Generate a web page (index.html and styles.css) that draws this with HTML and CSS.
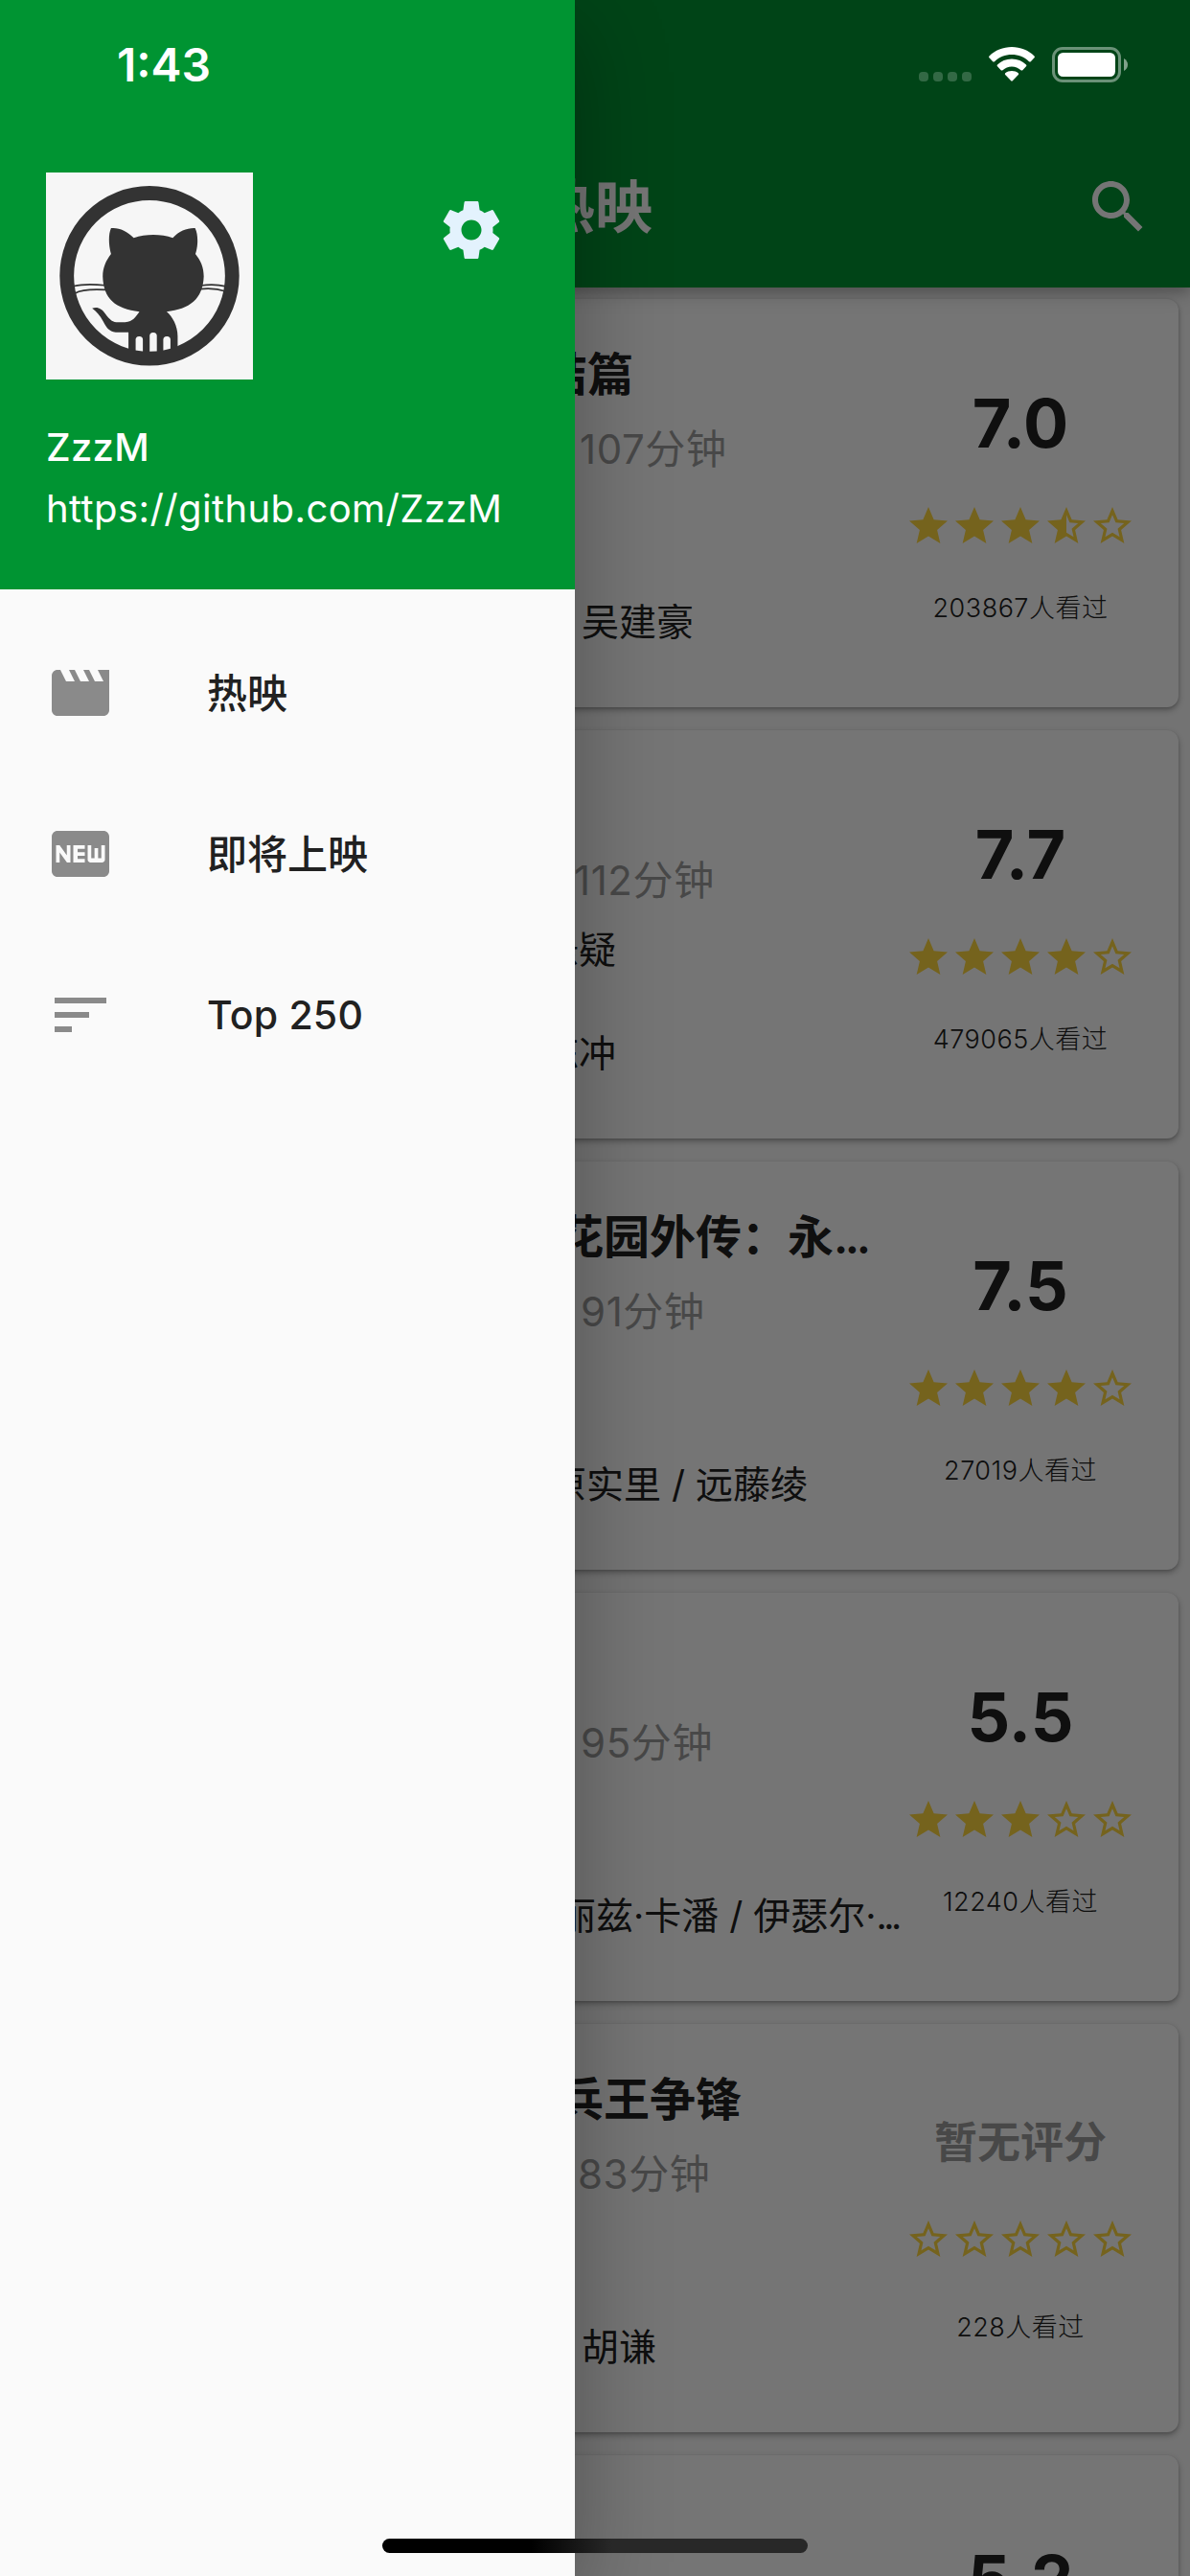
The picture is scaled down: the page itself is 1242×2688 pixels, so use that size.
FILE: index.html
```html
<!DOCTYPE html>
<html lang="zh-CN">
<head>
<meta charset="utf-8">
<title>热映</title>
<link rel="stylesheet" href="styles.css">
</head>
<body>
<svg class="defs" aria-hidden="true">
  <symbol id="star" viewBox="0 0 24 24"><path d="M12 17.27L18.18 21l-1.64-7.03L22 9.24l-7.19-.61L12 2 9.19 8.63 2 9.24l5.46 4.73L5.82 21z"/></symbol>
  <symbol id="half" viewBox="0 0 24 24"><path d="M22 9.24l-7.19-.62L12 2 9.19 8.63 2 9.24l5.46 4.73L5.82 21 12 17.27 18.18 21l-1.63-7.03L22 9.24zM12 15.4V6.1l1.71 4.04 4.38.38-3.32 2.88 1 4.28L12 15.4z"/></symbol>
  <symbol id="empty" viewBox="0 0 24 24"><path d="M22 9.24l-7.19-.62L12 2 9.19 8.63 2 9.24l5.46 4.73L5.82 21 12 17.27 18.18 21l-1.63-7.03L22 9.24zM12 15.4l-3.76 2.27 1-4.28-3.32-2.88 4.38-.38L12 6.1l1.71 4.04 4.38.38-3.32 2.88 1 4.28L12 15.4z"/></symbol>
</svg>
<div class="screen">
  <header class="appbar">
    <h1 class="appbar-title">热映</h1>
    <svg class="search" viewBox="0 0 24 24"><path d="M15.5 14h-.79l-.28-.27C15.41 12.59 16 11.11 16 9.5 16 5.91 13.09 3 9.5 3S3 5.91 3 9.5 5.91 16 9.5 16c1.61 0 3.09-.59 4.23-1.57l.27.28v.79l5 4.99L20.49 19l-4.99-5zm-6 0C7.01 14 5 11.99 5 9.5S7.01 5 9.5 5 14 7.01 14 9.5 11.99 14 9.5 14z"/></svg>
  </header>
  <main class="list">
    <article class="card ipman">
      <div class="info">
        <h2 class="title">结篇</h2>
        <p class="meta">107分钟</p>
        <p class="cast">吴建豪</p>
      </div>
      <div class="rating">
        <div class="score">7.0</div>
        <div class="stars"><svg><use href="#star"/></svg><svg><use href="#star"/></svg><svg><use href="#star"/></svg><svg><use href="#half"/></svg><svg><use href="#empty"/></svg></div>
        <div class="count">203867人看过</div>
      </div>
    </article>
    <article class="card sheep">
      <div class="info">
        <p class="meta">112分钟</p>
        <p class="genre">悬疑</p>
        <p class="cast">陈冲</p>
      </div>
      <div class="rating">
        <div class="score">7.7</div>
        <div class="stars"><svg><use href="#star"/></svg><svg><use href="#star"/></svg><svg><use href="#star"/></svg><svg><use href="#star"/></svg><svg><use href="#empty"/></svg></div>
        <div class="count">479065人看过</div>
      </div>
    </article>
    <article class="card violet">
      <div class="info">
        <h2 class="title">花园外传：永<span class="dots">...</span></h2>
        <p class="meta">91分钟</p>
        <p class="cast">原实里 / 远藤绫</p>
      </div>
      <div class="rating">
        <div class="score">7.5</div>
        <div class="stars"><svg><use href="#star"/></svg><svg><use href="#star"/></svg><svg><use href="#star"/></svg><svg><use href="#star"/></svg><svg><use href="#empty"/></svg></div>
        <div class="count">27019人看过</div>
      </div>
    </article>
    <article class="card family">
      <div class="info">
        <p class="meta">95分钟</p>
        <p class="cast">丽兹·卡潘 / 伊瑟尔·<span class="dots">...</span></p>
      </div>
      <div class="rating">
        <div class="score">5.5</div>
        <div class="stars"><svg><use href="#star"/></svg><svg><use href="#star"/></svg><svg><use href="#star"/></svg><svg><use href="#empty"/></svg><svg><use href="#empty"/></svg></div>
        <div class="count">12240人看过</div>
      </div>
    </article>
    <article class="card soldier">
      <div class="info">
        <h2 class="title">兵王争锋</h2>
        <p class="meta">83分钟</p>
        <p class="cast">胡谦</p>
      </div>
      <div class="rating unrated">
        <div class="score">暂无评分</div>
        <div class="stars"><svg><use href="#empty"/></svg><svg><use href="#empty"/></svg><svg><use href="#empty"/></svg><svg><use href="#empty"/></svg><svg><use href="#empty"/></svg></div>
        <div class="count">228人看过</div>
      </div>
    </article>
    <article class="card">
      <div class="info"></div>
      <div class="rating">
        <div class="score">5.2</div>
      </div>
    </article>
  </main>

  <div class="scrim"></div>

  <aside class="drawer">
    <div class="drawer-header">
      <div class="account">
        <svg class="avatar" viewBox="121 455 547 547">
          <rect x="121" y="455" width="547" height="547" fill="#f6f6f6"/>
          <g fill="none" stroke="#333" stroke-width="4">
            <path d="M195 755C220 749 245 750 278 753M198 774C215 764 245 763 280 765M530 754C555 750 575 751 597 756M528 763C555 760 575 762 596 769"/>
          </g>
          <path fill="#333" d="M293 602C315 600 335 610 353 628C385 617 425 617 456 628C472 610 495 601 515 602C524 620 523 650 516 670C530 688 538 705 538 730C536 790 500 816 440 823C455 836 469 860 469 888V940H339V877H305C288 876 279 862 272 848C263 832 254 822 243 814C257 808 269 816 277 827C290 845 298 851 312 851H330C352 849 358 836 368 823C305 815 273 790 271 730C271 705 280 687 293 670C287 650 285 620 293 602Z"/>
          <g fill="#f6f6f6"><rect x="358" y="888" width="19" height="50" rx="9"/><rect x="395" y="878" width="19" height="60" rx="9"/><rect x="431" y="888" width="19" height="50" rx="9"/></g>
          <circle cx="394.500" cy="728" r="218.500" fill="none" stroke="#333" stroke-width="37.500"/>
        </svg>
        <svg class="gear" viewBox="0 0 24 24"><path d="M19.43 12.98c.04-.32.07-.64.07-.98s-.03-.66-.07-.98l2.11-1.65c.19-.15.24-.42.12-.64l-2-3.460c-.12-.22-.39-.3-.61-.22l-2.490 1c-.52-.4-1.080-.73-1.690-.98l-.38-2.650C14.460 2.180 14.250 2 14 2h-4c-.25 0-.46.18-.49.42l-.38 2.650c-.61.25-1.170.59-1.690.98l-2.490-1c-.23-.09-.49 0-.61.22l-2 3.460c-.13.22-.07.49.12.64l2.110 1.650c-.04.32-.07.65-.07.98s.03.66.07.98l-2.110 1.650c-.19.15-.24.42-.12.64l2 3.460c.12.22.39.3.61.22l2.490-1c.52.4 1.080.73 1.690.98l.38 2.650c.03.24.24.42.49.42h4c.25 0 .46-.18.49-.42l.38-2.650c.61-.25 1.170-.59 1.690-.98l2.490 1c.23.09.49 0 .61-.22l2-3.460c.12-.22.07-.49-.12-.64l-2.110-1.650zM12 15.500c-1.930 0-3.500-1.570-3.500-3.500s1.570-3.500 3.500-3.500 3.500 1.570 3.500 3.500-1.570 3.500-3.500 3.500z"/></svg>
      </div>
      <div class="name">ZzzM</div>
      <div class="url">https://github.com/ZzzM</div>
    </div>
    <nav class="menu">
      <a class="item"><svg viewBox="0 0 24 24"><path d="M18 4l2 4h-3l-2-4h-2l2 4h-3l-2-4H8l2 4H7L5 4H4c-1.100 0-1.990.9-1.990 2L2 18c0 1.100.9 2 2 2h16c1.100 0 2-.9 2-2V4h-4z"/></svg><span>热映</span></a>
      <a class="item"><svg viewBox="0 0 24 24"><path d="M20 4H4c-1.110 0-1.990.89-1.990 2L2 18c0 1.110.89 2 2 2h16c1.110 0 2-.89 2-2V6c0-1.110-.89-2-2-2zM8.500 15H7.300l-2.550-3.500V15H3.500V9h1.250l2.500 3.500V9H8.500v6zm5-4.740H11v1.120h2.500v1.260H11v1.110h2.500V15h-4V9h4v1.260zm7 3.740c0 .55-.45 1-1 1h-4c-.55 0-1-.45-1-1V9h1.250v4.510h1.130V9.990h1.250v3.510h1.120V9h1.250v5z"/></svg><span>即将上映</span></a>
      <a class="item"><svg viewBox="0 0 24 24"><path d="M3 18h6v-2H3v2zM3 6v2h18V6H3zm0 7h12v-2H3v2z"/></svg><span class="latin">Top 250</span></a>
    </nav>
  </aside>

  <div class="statusbar">
    <div class="time">1:43</div>
    <div class="signal"><i></i><i></i><i></i><i></i></div>
    <svg class="wifi" viewBox="0 0 48 36"><g fill="#fff"><path d="M24 0C33 0 41.500 3.500 47.500 9.500Q48.300 10.400 47.500 11.300L43.800 15.200Q43 16 42 15.200C37 10.500 31 8 24 8S11 10.500 6 15.200Q5 16 4.200 15.200L.5 11.300Q-.3 10.400.5 9.500C6.500 3.500 15 0 24 0Z"/><path d="M24 12.500C30 12.500 35 14.800 39 18.500Q39.900 19.400 39 20.300L35.300 24.200Q34.500 25 33.500 24.200C30.800 21.900 27.700 20.500 24 20.500S17.200 21.900 14.500 24.200Q13.500 25 12.700 24.200L9 20.300Q8.100 19.400 9 18.500C13 14.800 18 12.500 24 12.500Z"/><path d="M24 25C26.700 25 29 25.900 30.800 27.300Q31.600 28.200 30.800 29.100L24.800 35.300Q24 36 23.200 35.300L17.200 29.100Q16.400 28.200 17.200 27.300C19 25.900 21.300 25 24 25Z"/></g></svg>
    <svg class="battery" viewBox="0 0 80 37"><rect x="1.500" y="1.500" width="69" height="34" rx="9.500" fill="none" stroke="#fff" stroke-opacity=".42" stroke-width="3"/><rect x="6" y="6" width="60" height="25" rx="5.500" fill="#fff"/><path d="M75 12Q79 14.500 79 18.500T75 25Z" fill="#fff" fill-opacity=".5"/></svg>
  </div>
  <div class="home"></div>
</div>
</body>
</html>
```
FILE: styles.css
```css
* { box-sizing: border-box; margin: 0; padding: 0; }

body {
  font-family: Inter, "Noto Sans CJK SC", sans-serif;
  color: #212121;
}

.defs { display: none; }

.screen {
  position: relative;
  width: 1242px;
  height: 2688px;
  overflow: hidden;
  background: #fafafa;
}

/* App bar */
.appbar {
  position: relative;
  z-index: 1;
  display: grid;
  grid-template-columns: 111px 1fr 111px;
  align-items: center;
  height: 300px;
  padding-top: 132px;
  background: #009432;
  color: #fff;
  box-shadow: 0 6px 12px rgba(0, 0, 0, .2), 0 3px 30px rgba(0, 0, 0, .14);
}
.appbar-title {
  grid-column: 2;
  text-align: center;
  font-size: 60px;
  font-weight: 600;
  line-height: 72px;
}
.search { width: 72px; height: 72px; fill: #fff; }

/* Movie list */
.list {
  display: flex;
  flex-direction: column;
  gap: 24px;
  padding: 12px;
}
.card {
  display: flex;
  flex: none;
  height: 426px;
  padding-left: 552px;
  background: #fff;
  border-radius: 12px;
  box-shadow: 0 3px 6px rgba(0, 0, 0, .3), 0 1px 3px rgba(0, 0, 0, .12);
}

/* Fixed rows keep the lines aligned when a card has no title or genre */
.info {
  display: grid;
  grid-template-rows: 84px 74px 108px 56px;
  align-content: start;
  align-items: start;
  width: 381px;
  flex: none;
  padding-top: 43px;
  white-space: nowrap;
}
.title { grid-row: 1; font-size: 48px; font-weight: 600; line-height: 72px; }
.meta { grid-row: 2; font-size: 42px; line-height: 60px; letter-spacing: .6px; color: #9e9e9e; }
.genre { grid-row: 3; font-size: 39px; line-height: 56px; }
.cast { grid-row: 4; font-size: 39px; line-height: 56px; }
.dots { letter-spacing: -3.5px; }

.ipman .title { padding-left: 1px; }
.ipman .meta { padding-left: 41px; }
.ipman .cast { padding-left: 43px; }
.sheep .meta { padding-left: 35px; }
.sheep .genre, .sheep .cast { padding-left: 1px; }
.violet .title { padding-left: 18px; }
.violet .meta { padding-left: 42px; }
.violet .cast { padding-left: 9px; }
.family .meta { padding-left: 42px; }
.family .cast { padding-left: 19px; }
.soldier .title { padding-left: 18px; }
.soldier .meta { padding-left: 39px; }
.soldier .cast { padding-left: 43px; }

.rating {
  display: flex;
  flex-direction: column;
  align-items: center;
  width: 240px;
  flex: none;
  padding-top: 87px;
}
.score { font-size: 70px; font-weight: 700; line-height: 86px; }
.stars { display: flex; margin-top: 40px; }
.stars svg { width: 48px; height: 48px; fill: #ffd740; }
.count { margin-top: 44px; font-size: 27px; font-weight: 300; line-height: 36px; letter-spacing: .5px; white-space: nowrap; }
.unrated { padding-top: 92px; }
.unrated .score { font-size: 45px; line-height: 64px; color: #9e9e9e; }
.unrated .stars { margin-top: 45px; }
.unrated .count { margin-top: 50px; }

.scrim {
  position: absolute;
  inset: 0;
  z-index: 2;
  background: rgba(0, 0, 0, .54);
}

/* Drawer */
.drawer {
  position: absolute;
  z-index: 3;
  top: 0;
  left: 0;
  width: 600px;
  height: 100%;
  background: #fafafa;
  box-shadow: 0 30px 90px rgba(0, 0, 0, .3);
}
.drawer-header {
  height: 615px;
  padding: 180px 72px 0 48px;
  background: #009432;
  color: #fff;
}
.account {
  display: flex;
  justify-content: space-between;
  align-items: flex-start;
}
.avatar { width: 216px; height: 216px; }
.gear { width: 72px; height: 72px; margin-top: 24px; fill: #e3f2fd; }
.name { margin-top: 41px; font-size: 40px; font-weight: 500; line-height: 60px; letter-spacing: .3px; }
.url { margin-top: 4px; font-size: 40px; line-height: 60px; letter-spacing: .4px; white-space: nowrap; }

.menu { padding-top: 24px; }
.item {
  display: flex;
  align-items: center;
  gap: 96px;
  height: 168px;
  padding-left: 48px;
  font-size: 42px;
  font-weight: 500;
}
.item svg { width: 72px; height: 72px; fill: #8a8a8a; }
.item span { padding-bottom: 6px; }
.item .latin { padding-bottom: 1px; font-size: 41px; font-weight: 450; letter-spacing: .2px; }

/* System chrome */
.statusbar {
  position: absolute;
  z-index: 4;
  inset: 0 0 auto 0;
  display: flex;
  align-items: flex-start;
  height: 132px;
  padding: 49px 64px 0 122px;
  color: #fff;
}
.time { margin-top: -11px; font-size: 48px; font-weight: 600; line-height: 60px; }
.signal { display: flex; gap: 5px; margin: 26px 18px 0 auto; }
.signal i { width: 10px; height: 10px; border-radius: 4px; background: rgba(255, 255, 255, .2); }
.wifi { width: 48px; height: 36px; margin-right: 18px; }
.battery { width: 80px; height: 37px; }

.home {
  position: absolute;
  z-index: 4;
  left: 399px;
  bottom: 24px;
  width: 444px;
  height: 15px;
  border-radius: 8px;
  background: linear-gradient(90deg, #000 35%, #282828 54%);
}
```
